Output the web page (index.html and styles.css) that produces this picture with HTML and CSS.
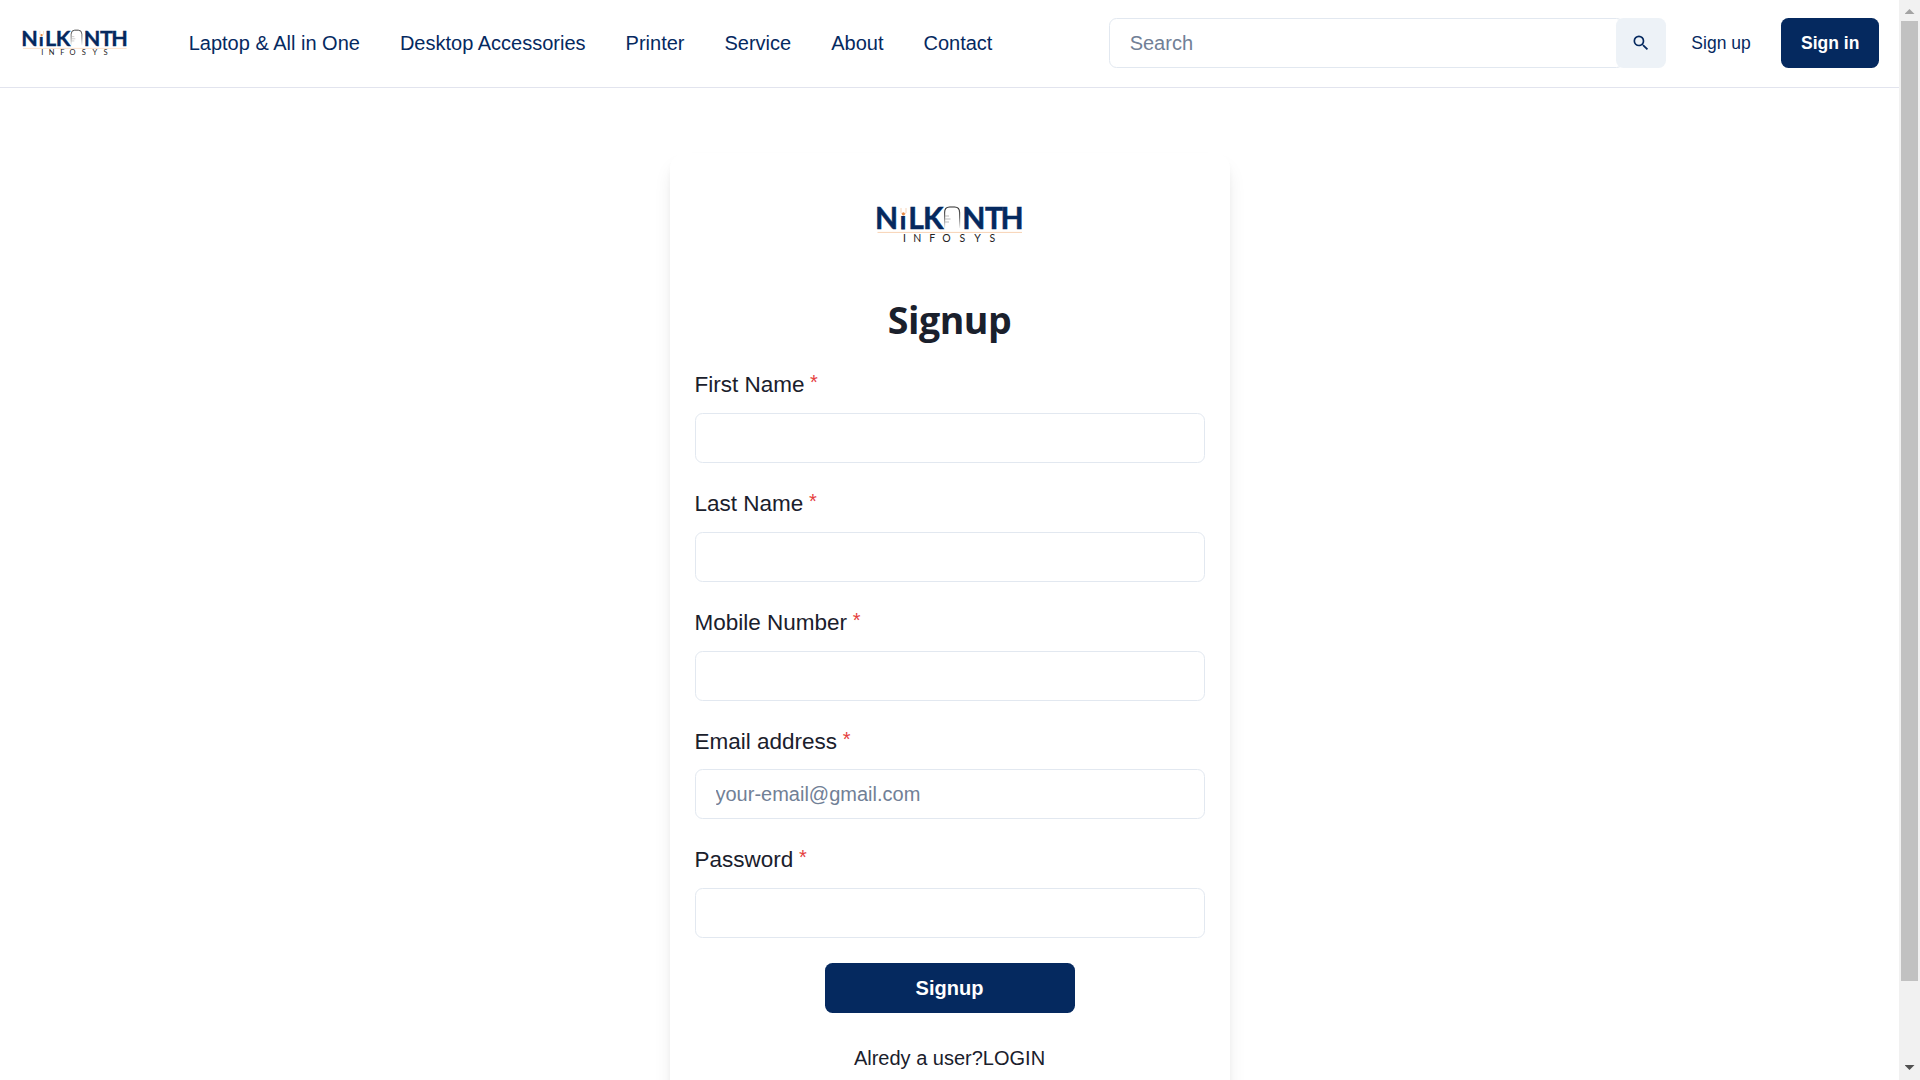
FILE: index.html
```html
<!DOCTYPE html>
<html lang="en">
<head>
<meta charset="utf-8">
<title>Nilkonth Infosys - Signup</title>
<link rel="stylesheet" href="styles.css">
</head>
<body>
<svg class="defs" aria-hidden="true">
  <defs>
    <linearGradient id="arch-fade" gradientUnits="userSpaceOnUse" x1="0" y1="16" x2="0" y2="39">
      <stop offset="0" stop-color="#222"/>
      <stop offset="0.5" stop-color="#777"/>
      <stop offset="1" stop-color="#fff"/>
    </linearGradient>
    <symbol id="brand" viewBox="0 0 180 60">
      <text class="brand-name" x="15 48.2 63 102.2 125 140.6" y="39.2">NLKNTH</text>
      <text class="brand-name brand-i" x="39.9" y="39.2">i</text>
      <rect x="39" y="18" width="8" height="8" fill="#fff"/>
      <path d="M41 18v4.5l2.5 3.5 2.5-3.5V18" fill="none" stroke="#f6c9a4" stroke-width="0.8"/>
      <circle cx="43.4" cy="23.8" r="1.5" fill="#e58a45"/>
      <path d="M84.6 38V22.5q0-5.5 5-5.5h5q5 0 5 5.5V38" fill="none" stroke="url(#arch-fade)" stroke-width="1.2"/>
      <path d="M85 26h4M85 29h5.5M85 32h4" stroke="#aaa" stroke-width="0.8"/>
      <path d="M17.5 42.4H162" stroke="#f8d3b4" stroke-width="1"/>
      <text class="brand-sub" x="43 53.2 69.3 82.3 99.5 114.3 129.6" y="52">INFOSYS</text>
    </symbol>
  </defs>
</svg>
<div class="window">
  <div class="page">
    <header class="header">
      <svg class="logo-small"><use href="#brand"/></svg>
      <nav class="nav">
        <a>Laptop &amp; All in One</a>
        <a>Desktop Accessories</a>
        <a>Printer</a>
        <a>Service</a>
        <a>About</a>
        <a>Contact</a>
      </nav>
      <div class="search">
        <input class="search-input" type="text" placeholder="Search">
        <button class="search-button" aria-label="Search">
          <svg viewBox="0 0 24 24" width="20" height="20" fill="currentColor"><path d="M15.5 14h-.79l-.28-.27A6.471 6.471 0 0 0 16 9.5 6.5 6.5 0 1 0 9.5 16c1.61 0 3.09-.59 4.23-1.57l.27.28v.79l5 4.99L20.49 19l-4.99-5zm-6 0C7.01 14 5 11.99 5 9.5S7.01 5 9.5 5 14 7.01 14 9.5 11.99 14 9.5 14z"/></svg>
        </button>
      </div>
      <a class="sign-up">Sign up</a>
      <button class="button sign-in">Sign in</button>
    </header>
    <main class="card">
      <svg class="logo-large"><use href="#brand"/></svg>
      <h1 class="title">Signup</h1>
      <form class="form">
        <label class="field"><span class="label">First Name<span class="required">*</span></span><input class="input" type="text"></label>
        <label class="field"><span class="label">Last Name<span class="required">*</span></span><input class="input" type="text"></label>
        <label class="field"><span class="label">Mobile Number<span class="required">*</span></span><input class="input" type="text"></label>
        <label class="field"><span class="label">Email address<span class="required">*</span></span><input class="input" type="text" placeholder="your-email@gmail.com"></label>
        <label class="field"><span class="label">Password<span class="required">*</span></span><input class="input" type="password"></label>
        <button class="button submit" type="button">Signup</button>
      </form>
      <p class="login">Alredy a user?<a>LOGIN</a></p>
    </main>
  </div>
  <div class="scrollbar">
    <span class="arrow arrow-up"></span>
    <span class="thumb"></span>
    <span class="arrow arrow-down"></span>
  </div>
</div>
</body>
</html>
```
FILE: styles.css
```css
* {
  box-sizing: border-box;
}

body {
  margin: 0;
  overflow: hidden;
  background: #fff;
  color: #1a202c;
  font: 20px/30px "Liberation Sans", Arial, sans-serif;
}

.defs {
  display: block;
  width: 0;
  height: 0;
}

.window {
  display: flex;
  height: 1080px;
  overflow: hidden;
}

.page {
  flex: 1;
  overflow: hidden;
}

.header {
  display: flex;
  align-items: center;
  height: 88px;
  padding: 0 20px 2px 10px;
  border-bottom: 1px solid #e2e4ee;
  color: #05295f;
}

.logo-small {
  width: 130px;
  height: 43px;
  margin-right: 48.7px;
  margin-bottom: 6px;
}

.brand-name {
  font: 700 30px Lato, sans-serif;
  fill: #05295f;
  stroke: #05295f;
  stroke-width: 0.5px;
}

.brand-i {
  font-size: 24px;
  stroke-width: 0.9px;
}

.brand-sub {
  font: 400 10.5px Lato, sans-serif;
  fill: #222;
}

.nav {
  display: flex;
  gap: 40px;
  white-space: nowrap;
}

.search {
  display: flex;
  width: 557px;
  margin-left: auto;
}

.input,
.search-input {
  height: 50px;
  padding: 0 20px;
  border: 1px solid #e2e8f0;
  border-radius: 7.5px;
  background: #fff;
  color: inherit;
  font: inherit;
  outline: none;
}

.input::placeholder,
.search-input::placeholder {
  color: #718096;
  opacity: 1;
}

.search-input {
  flex: 1;
  margin-right: -8px;
  padding-top: 2px;
}

.search-button {
  display: flex;
  align-items: center;
  justify-content: center;
  width: 50px;
  height: 50px;
  padding: 0;
  border: 0;
  border-radius: 7.5px;
  background: #edf2f7;
  color: #05295f;
  z-index: 1;
}

.sign-up {
  margin: 0 30.3px 0 25.7px;
  font-size: 17.5px;
}

.button {
  height: 50px;
  padding: 0 20px;
  border: 0;
  border-radius: 7.5px;
  background: #05295f;
  color: #fff;
  font: 700 20px/30px "Liberation Sans", Arial, sans-serif;
}

.sign-in {
  width: 98px;
  font-size: 17.5px;
  white-space: nowrap;
}

.card {
  display: flex;
  flex-direction: column;
  align-items: center;
  width: 560px;
  height: 990px;
  margin: 65px auto 0;
  padding: 37px 25px 0;
  border-radius: 15px;
  background: #fff;
  box-shadow: 0 12.5px 18.75px -3.75px rgba(0, 0, 0, 0.1), 0 5px 7.5px -2.5px rgba(0, 0, 0, 0.05);
}

.logo-large {
  width: 180px;
  height: 60px;
}

.title {
  margin: 45px 0 0;
  font: 700 37.5px/50px "Open Sans", "Noto Sans", sans-serif;
  letter-spacing: -0.5px;
}

.form {
  display: flex;
  flex-direction: column;
  gap: 25px;
  width: 510px;
  margin-top: 24.25px;
}

.field {
  display: flex;
  flex-direction: column;
  gap: 10px;
}

.label {
  height: 33.75px;
  font-size: 22.5px;
  line-height: 32.5px;
}

.required {
  margin-left: 5.6px;
  color: #e53e3e;
  font-size: 20px;
  line-height: 1;
  vertical-align: 3px;
}

.submit {
  width: 250px;
  align-self: center;
}

.login {
  margin: 30px 0 0;
}

.scrollbar {
  display: flex;
  flex-direction: column;
  align-items: center;
  width: 21px;
  padding: 9px 0 10px;
  background: #f1f1f1;
}

.thumb {
  width: 17px;
  height: 960px;
  margin: 7px 0 auto;
  background: #c1c1c1;
}

.arrow {
  width: 10px;
  height: 5px;
}

.arrow-up {
  background: #a3a3a3;
  clip-path: polygon(50% 0, 100% 100%, 0 100%);
}

.arrow-down {
  background: #505050;
  clip-path: polygon(0 0, 100% 0, 50% 100%);
}
```
